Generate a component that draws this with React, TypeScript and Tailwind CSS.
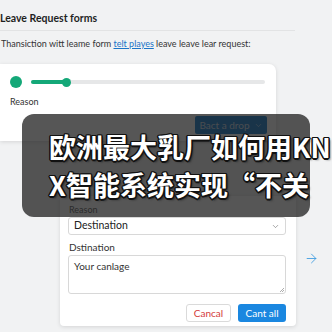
import React from 'react';
import { ArrowRight, ChevronDown } from 'lucide-react';

const font = '[font-family:Lato,"Liberation_Sans",sans-serif]';

const LeaveCard: React.FC = () => (
  <div className="w-[276px] bg-white rounded-r-[7px] shadow-[0_1px_4px_rgba(0,0,0,0.12)] pt-[12px] pb-[7px] pl-[10px] pr-[9px]">
    <div className="flex items-center gap-[9px] pr-[2px]">
      <div className="w-[12px] h-[12px] rounded-full bg-[#14a878] shrink-0" />
      <div className="relative flex-1 h-[4px] rounded-full bg-[#e6e7e8]">
        <div className="absolute left-0 top-0 h-[4px] w-[35px] rounded-full bg-[#14a878]" />
        <div className="absolute left-[31px] top-[-2.5px] w-[9px] h-[9px] rounded-full bg-[#14a878]" />
      </div>
    </div>
    <div className="mt-[7px] text-[9px] leading-[13px] text-[#333]">Reason</div>
    <div className="flex justify-end mt-[8px]">
      <button className="h-[18px] w-[72px] flex items-center justify-center gap-[4px] bg-[#0e78cc] text-[10px] text-[#c9d6e2] rounded-[2px]">
        Bact a drop <ChevronDown size={9} strokeWidth={1.5} />
      </button>
    </div>
  </div>
);

const RequestModal: React.FC = () => (
  <div className="w-[236px] bg-white rounded-[4px] shadow-[0_1px_4px_rgba(0,0,0,0.12)] pt-[8px] pb-[4px] pl-[8px] pr-[10px]">
    <div className="pl-[1px] text-[9px] leading-[12px] text-[#555]">Reason</div>
    <div className="mt-[1px] h-[18px] border border-[#d8d8d8] rounded-[3px] flex items-center justify-between pl-[5px] pr-[5px] text-[10.5px] text-[#222]">
      <span>Destination</span>
      <ChevronDown size={9} strokeWidth={1.5} className="text-[#666]" />
    </div>
    <div className="mt-[5px] pl-[1px] text-[10px] leading-[14px] text-[#333]">Dstination</div>
    <div className="relative mt-[1px] h-[39px] border border-[#d8d8d8] rounded-[3px] px-[5px] pt-[3px] text-[10px] leading-[14px] text-[#333]">
      Your canlage
      <svg className="absolute right-[1px] bottom-[1px]" width="5" height="5" viewBox="0 0 5 5">
        <path d="M1 5 L5 1 M3 5 L5 3" stroke="#999" strokeWidth="0.8" />
      </svg>
    </div>
    <div className="mt-[10px] flex justify-end gap-[7px]">
      <button className="h-[18px] w-[45px] border border-[#dadada] rounded-[3px] bg-white text-[10px] text-[#d33a3a]">Cancal</button>
      <button className="h-[18px] w-[48px] rounded-[3px] bg-[#1a87e0] text-[10px] text-white">Cant all</button>
    </div>
  </div>
);

const App: React.FC = () => {
  return (
    <div className={`relative w-[332px] h-[332px] overflow-hidden bg-[#f1f2f3] ${font}`}>
      <div className="pt-[10px]">
        <h1 className="text-[10.5px] leading-[16px] font-bold text-[#1f1f1f]">Leave Request forms</h1>
        <div className="mt-[4px] w-[295px] h-px bg-[#e2e3e4]" />
        <p className="mt-[6px] pl-[1px] whitespace-nowrap text-[9px] leading-[14px] text-[#333]">
          Thansiction witt leame form <span className="text-[#1b74c7] underline">telt playes</span> leave leave lear request:
        </p>
      </div>
      <div className="mt-[13px]">
        <LeaveCard />
      </div>
      <div className="mt-[55px] ml-[60px] flex items-start">
        <RequestModal />
        <ArrowRight size={15} strokeWidth={1.4} className="ml-[8px] mt-[55px] text-[#3d9be0]" />
      </div>

      <div className="absolute left-[22px] top-[114px] w-[288px] h-[103px] rounded-[12px] bg-[rgba(30,30,30,0.75)]">
        <div className="absolute left-[27px] top-[14px] whitespace-nowrap text-[27px] leading-[38px] font-bold text-white [font-family:'Noto_Sans_CJK_SC',sans-serif] [text-shadow:1.5px_0_0_#111,-1.5px_0_0_#111,0_1.5px_0_#111,0_-1.5px_0_#111,1px_1px_0_#111,-1px_-1px_0_#111,1px_-1px_0_#111,-1px_1px_0_#111,2px_2px_2px_rgba(0,0,0,0.5)]">
          <div>欧洲最大乳厂如何用KN</div>
          <div>X智能系统实现“不关</div>
        </div>
      </div>
    </div>
  );
};

export default App;
